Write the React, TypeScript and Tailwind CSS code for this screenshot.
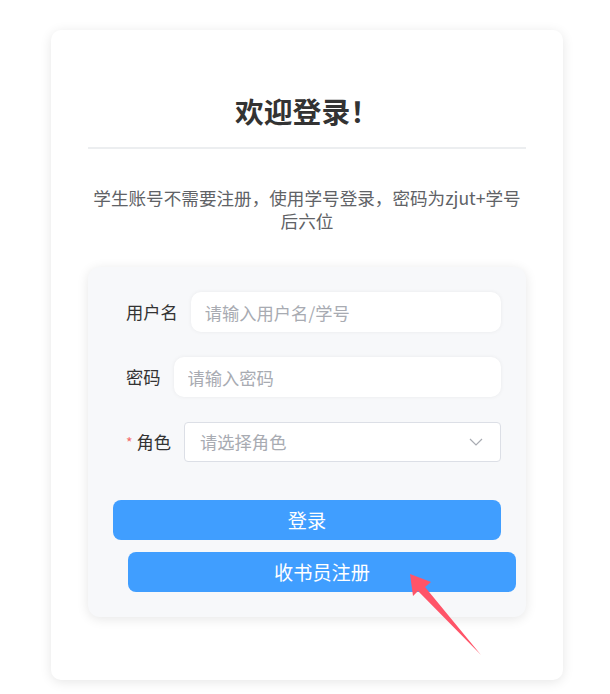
import React from 'react';

const cjk = { fontFamily: '"Noto Sans CJK SC", "Noto Sans", sans-serif' };

const Field = ({ label, placeholder, required }: { label: string; placeholder: string; required?: boolean }) => (
  <div className="flex items-center h-[40px] pl-[13px]">
    <label className="flex items-center pr-[13px] text-[17.28px] leading-[40px] text-[#333] whitespace-nowrap">
      {required && <span className="mr-[4px] text-[14px] text-[#f56c6c]">*</span>}
      {label}
    </label>
    <input
      readOnly
      placeholder={placeholder}
      className="flex-1 min-w-0 h-[40px] rounded-[10px] bg-white px-[14px] text-[17.28px] outline-none shadow-[0_0_4px_rgba(0,0,0,0.06)] placeholder:text-[#a8abb2]"
      style={cjk}
    />
  </div>
);

export default function App() {
  return (
    <div className="relative min-h-screen bg-white pt-[30px]" style={cjk}>
      <div className="ml-[51px] w-[512px] h-[650px] rounded-[10px] bg-white px-[37px] pt-[61px] shadow-[0_2px_12px_rgba(0,0,0,0.1)]">
        <h2 className="text-center text-[28.8px] leading-[40px] font-bold text-[#333]">欢迎登录！</h2>
        <div className="mt-[16px] h-[2px] bg-[#eceef0]" />
        <p className="mt-[37px] text-center text-[17.6px] leading-[23px] text-[#606266]">
          学生账号不需要注册，使用学号登录，密码为zjut+学号
          <br />
          后六位
        </p>

        <div className="mt-[35px] rounded-[12px] bg-[#f7f8fa] p-[25px] shadow-[0_2px_12px_rgba(0,0,0,0.1)]">
          <div className="flex flex-col gap-[25px]">
            <Field label="用户名" placeholder="请输入用户名/学号" />
            <Field label="密码" placeholder="请输入密码" />
            <div className="flex items-center h-[40px] pl-[13px]">
              <label className="flex items-center pr-[13px] text-[17.28px] leading-[40px] text-[#333] whitespace-nowrap">
                <span className="mr-[4px] text-[14px] text-[#f56c6c]">*</span>
                角色
              </label>
              <div className="flex flex-1 items-center justify-between h-[40px] rounded-[4px] border border-[#dcdfe6] bg-white pl-[15px] pr-[17px]">
                <span className="text-[17.28px] text-[#a8abb2]">请选择角色</span>
                <svg width="14" height="8" viewBox="0 0 14 8" fill="none">
                  <path d="M1 1 L7 7 L13 1" stroke="#a8abb2" strokeWidth="1.2" />
                </svg>
              </div>
            </div>
          </div>

          <button className="mt-[38px] block w-full h-[40px] rounded-[8px] bg-[#409eff] text-[19.2px] text-white">
            登录
          </button>
          <button className="mt-[12px] block ml-[15px] w-[388px] h-[40px] rounded-[8px] bg-[#409eff] text-[19.2px] text-white">
            收书员注册
          </button>
        </div>
      </div>

      <svg className="absolute left-0 top-0 pointer-events-none" width="610" height="694">
        <polygon points="410,574 431,582 425,587 481,655 418,591 413,596" fill="#ff5468" />
      </svg>
    </div>
  );
}
